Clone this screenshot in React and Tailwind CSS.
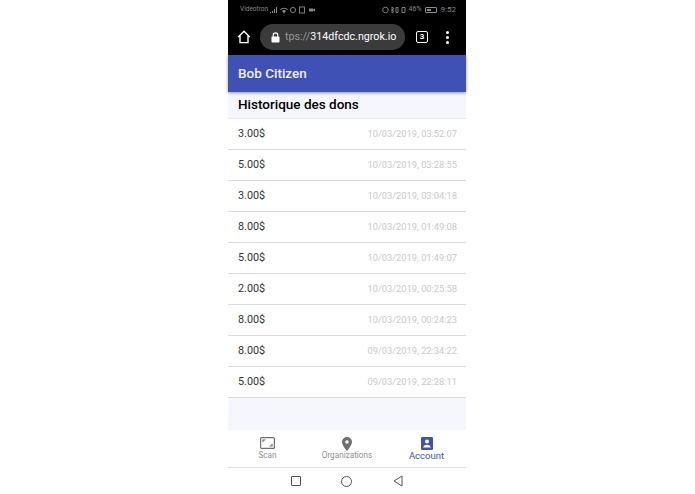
import React from 'react';

const dons = [
  { amount: '3.00$', date: '10/03/2019, 03:52:07' },
  { amount: '5.00$', date: '10/03/2019, 03:28:55' },
  { amount: '3.00$', date: '10/03/2019, 03:04:18' },
  { amount: '8.00$', date: '10/03/2019, 01:49:08' },
  { amount: '5.00$', date: '10/03/2019, 01:49:07' },
  { amount: '2.00$', date: '10/03/2019, 00:25:58' },
  { amount: '8.00$', date: '10/03/2019, 00:24:23' },
  { amount: '8.00$', date: '09/03/2019, 22:34:22' },
  { amount: '5.00$', date: '09/03/2019, 22:28:11' },
];

function StatusBar() {
  return (
    <div className="h-[19px] bg-black flex items-center justify-between pl-[12px] pr-[10px] text-[7px] text-[#8a8a8a]">
      <div className="flex items-center gap-[5px]">
        <span className="w-[25px] text-[6.5px] whitespace-nowrap">Videotron</span>
        <svg width="46" height="8" viewBox="0 0 46 8" fill="#8a8a8a">
          <path d="M0 6h1v1H0zM2 5h1v2H2zM4 3h1v4H4zM6 1h1v6H6z" />
          <path d="M10 3.2a6 6 0 0 1 8 0l-.8.8a5 5 0 0 0-6.4 0zM12 5a3 3 0 0 1 4 0L14 7.4z" />
          <circle cx="23" cy="4" r="2.6" fill="none" stroke="#8a8a8a" strokeWidth="0.9" />
          <rect x="29.5" y="1" width="5" height="6" fill="none" stroke="#8a8a8a" strokeWidth="0.9" />
          <rect x="39" y="2.5" width="4" height="3" />
          <path d="M43 3.5l2-1v3l-2-1z" />
        </svg>
      </div>
      <div className="flex items-center gap-[2px]">
        <svg width="25" height="8" viewBox="0 0 25 8" fill="none" stroke="#8a8a8a" strokeWidth="0.9">
          <circle cx="3.5" cy="4" r="2.8" />
          <path d="M10 1l2 1.5-2 1.5 2 1.5-2 1.5V1zM14 1.5h2v5h-2zM20 1.5h3v5h-3z" />
        </svg>
        <span>46%</span>
        <div className="ml-[1px] w-[12px] h-[6px] border border-[#8a8a8a] rounded-[1px] p-px">
          <div className="h-full w-1/2 bg-[#8a8a8a]" />
        </div>
        <span className="ml-[2px] text-[8px]">9:52</span>
      </div>
    </div>
  );
}

function BrowserBar() {
  return (
    <div className="h-[36px] bg-black flex items-center text-white">
      <svg className="ml-[9px]" width="14" height="14" viewBox="0 0 14 14" fill="none" stroke="white" strokeWidth="1.4">
        <path d="M1.2 7L7 1.3 12.8 7M3 5.5V12.6h8V5.5" />
      </svg>
      <div className="ml-[9px] w-[145px] h-[26px] rounded-full bg-[#3b3b3b] flex items-center pl-[11px] whitespace-nowrap overflow-hidden">
        <svg width="9" height="11" viewBox="0 0 9 11">
          <path d="M2.2 5V3.2a2.3 2.3 0 0 1 4.6 0V5" fill="none" stroke="white" strokeWidth="1.1" />
          <rect x="0.5" y="4.6" width="8" height="6" rx="0.8" fill="white" />
        </svg>
        <span className="ml-[5px] text-[10.7px] text-[#9a9a9a]">tps://</span>
        <span className="text-[10.7px] text-white">314dfcdc.ngrok.io</span>
      </div>
      <div className="ml-[11px] w-[12px] h-[12px] border-[1.5px] border-white rounded-[2px] flex items-center justify-center text-[8px] font-bold">
        3
      </div>
      <div className="ml-[18px] flex flex-col gap-[2px]">
        <div className="w-[3px] h-[3px] rounded-full bg-white" />
        <div className="w-[3px] h-[3px] rounded-full bg-white" />
        <div className="w-[3px] h-[3px] rounded-full bg-white" />
      </div>
    </div>
  );
}

function NavItem({ label, active, children, className }) {
  return (
    <div className={`flex flex-col items-center ${className}`}>
      <div className="h-[14px] flex items-start">{children}</div>
      <span className={active ? 'text-[9.5px] leading-[9px] text-[#3f51b5]' : 'text-[8.2px] leading-[9px] text-[#8f8f8f]'}>{label}</span>
    </div>
  );
}

export default function App() {
  return (
    <div className="w-[695px] h-[494px] bg-white flex justify-center font-['Roboto',sans-serif] antialiased">
      <div className="w-[238px] ml-[-1px] h-full flex flex-col bg-[#f5f7fc]">
        <StatusBar />
        <BrowserBar />

        <div className="h-[37px] bg-[#3f51b5] flex items-center pl-[10px] text-[13.5px] font-medium text-[#f0f0f8] shadow-[0_1px_3px_rgba(0,0,0,0.4)] relative">
          Bob Citizen
        </div>

        <div className="h-[27px] flex items-center pb-[2px] pl-[10px] text-[13.5px] font-medium text-black border-b border-[#e6e8ee]">
          Historique des dons
        </div>

        <div className="flex flex-col">
          {dons.map((don, i) => (
            <div key={i} className="h-[31px] bg-white border-b border-[#dcdcdc] flex items-center justify-between pl-[10px] pr-[9px]">
              <span className="text-[10.8px] text-[#333333]">{don.amount}</span>
              <span className="text-[9.3px] text-[#c9c9c9]">{don.date}</span>
            </div>
          ))}
        </div>

        <div className="flex-1" />

        <div className="h-[38px] bg-white flex items-start pt-[7px] border-b border-[#e0e0e0]">
          <NavItem label="Scan" className="w-[79px]">
            <svg width="15" height="12" viewBox="0 0 15 12" fill="none" stroke="#6f6f6f" strokeWidth="1.2">
              <rect x="0.6" y="0.6" width="13.8" height="10.8" rx="1" />
              <path d="M3 5V3h2.5M12 7v2H9.5" />
            </svg>
          </NavItem>
          <NavItem label="Organizations" className="w-[80px]">
            <svg width="10" height="14" viewBox="0 0 10 14">
              <path fillRule="evenodd" d="M5 0a5 5 0 0 1 5 5c0 3.4-5 9-5 9S0 8.4 0 5a5 5 0 0 1 5-5zm0 3.2a1.8 1.8 0 1 0 0 3.6 1.8 1.8 0 0 0 0-3.6z" fill="#6f6f6f" />
            </svg>
          </NavItem>
          <NavItem label="Account" active className="w-[79px]">
            <svg width="12" height="13" viewBox="0 0 12 13">
              <rect width="12" height="13" rx="1.2" fill="#3f51b5" />
              <circle cx="6" cy="4.6" r="2" fill="white" />
              <path d="M2.2 10.5c.4-2 2-2.7 3.8-2.7s3.4.7 3.8 2.7z" fill="white" />
            </svg>
          </NavItem>
        </div>

        <div className="h-[26px] bg-white flex items-center pl-[63px]">
          <div className="w-[10px] h-[10px] border border-[#555555] rounded-[1px]" />
          <div className="ml-[40px] w-[11px] h-[11px] border border-[#555555] rounded-full" />
          <svg className="ml-[41px]" width="10" height="12" viewBox="0 0 10 12" fill="none" stroke="#555555" strokeWidth="1">
            <path d="M1 6l8-5v10z" strokeLinejoin="round" />
          </svg>
        </div>
      </div>
    </div>
  );
}
